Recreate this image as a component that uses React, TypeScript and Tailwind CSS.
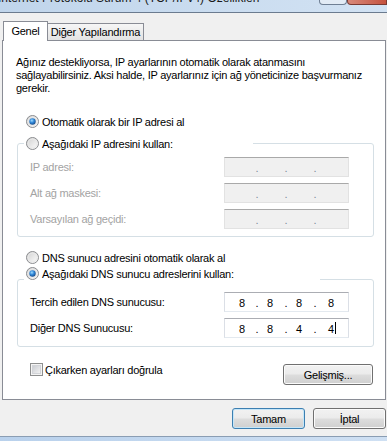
import React from "react";

function Radio({ checked }: { checked?: boolean }) {
  return (
    <svg width="13" height="13" viewBox="0 0 13 13" className="shrink-0 block">
      <defs>
        <linearGradient id="rbg" x1="0" y1="0" x2="1" y2="1">
          <stop offset="0" stopColor="#cfcfcf" />
          <stop offset="1" stopColor="#ffffff" />
        </linearGradient>
        <radialGradient id="rdot" cx="0.4" cy="0.35" r="0.75">
          <stop offset="0" stopColor="#9fdcff" />
          <stop offset="0.45" stopColor="#2f86d8" />
          <stop offset="1" stopColor="#123f78" />
        </radialGradient>
      </defs>
      <circle cx="6.5" cy="6.5" r="6" fill="url(#rbg)" stroke="#8a8c8f" />
      <circle cx="6.5" cy="6.5" r="4.5" fill="none" stroke="#e9e9e9" strokeWidth="1" />
      {checked && <circle cx="6.5" cy="6.5" r="3.2" fill="url(#rdot)" />}
    </svg>
  );
}

function Check() {
  return (
    <svg width="13" height="13" viewBox="0 0 13 13" className="shrink-0 block">
      <defs>
        <linearGradient id="cbg" x1="0" y1="0" x2="1" y2="1">
          <stop offset="0" stopColor="#c9ccd1" />
          <stop offset="1" stopColor="#f4f4f4" />
        </linearGradient>
      </defs>
      <rect x="0.5" y="0.5" width="12" height="12" fill="#f4f4f4" stroke="#8e8f8f" />
      <rect x="2.5" y="2.5" width="8" height="8" fill="url(#cbg)" stroke="#d2d4d8" />
    </svg>
  );
}

function IpBox({ values, disabled, caret }: { values: string[]; disabled?: boolean; caret?: boolean }) {
  const dot = disabled ? "text-[#7d8a99]" : "text-black";
  return (
    <div
      className={
        disabled
          ? "w-[125px] h-[20px] border border-[#e2e2e2] border-t-[#a9a9a9] bg-[#f0f0f0] flex items-center pl-[11px] pt-[2px] tracking-normal"
          : "w-[125px] h-[20px] border border-[#dbdfe6] border-t-[#abadb3] border-b-[#e3e9ef] bg-white flex items-center pl-[11px] pt-[2px] tracking-normal"
      }
    >
      <span className="w-[12px] text-center">{values[0]}</span>
      <span className={`ml-[6px] w-[6px] text-center ${dot}`}>.</span>
      <span className="ml-[4px] w-[12px] text-center">{values[1]}</span>
      <span className={`ml-[7px] w-[6px] text-center ${dot}`}>.</span>
      <span className="ml-[4px] w-[12px] text-center">{values[2]}</span>
      <span className={`ml-[7px] w-[6px] text-center ${dot}`}>.</span>
      <span className="ml-[7px] w-[12px] text-center relative">
        {values[3]}
        {caret && <span className="absolute left-[10px] top-[-1px] w-px h-[12px] bg-black" />}
      </span>
    </div>
  );
}

function Btn({ label, w, def }: { label: string; w: string; def?: boolean }) {
  return (
    <div
      className={`${w} h-[21px] rounded-[3px] border flex items-center justify-center bg-[linear-gradient(#f2f2f2_0%,#ebebeb_48%,#dddddd_52%,#cfcfcf_100%)] ${
        def ? "border-[#3c7fb1] shadow-[inset_0_0_0_1px_#c6e6f8]" : "border-[#707070] shadow-[inset_0_0_0_1px_#fbfbfb]"
      }`}
    >
      {label}
    </div>
  );
}

export default function App() {
  return (
    <div className="w-[387px] h-[441px] overflow-hidden bg-[#f0f0f0] flex flex-col font-['Liberation_Sans',Arial,sans-serif] text-[11px] leading-[12px] tracking-[-0.25px] text-black">
      {/* title bar */}
      <div className="h-[13px] shrink-0 flex items-start border-b border-[#6b7b8f] bg-[linear-gradient(90deg,#c0d5eb,#d2e2f3)] overflow-hidden">
        <span className="-mt-[9px] -ml-[2px] text-[12px] leading-[15px] tracking-normal whitespace-nowrap text-[#1a1a1a]">
          İnternet Protokolü Sürüm 4 (TCP/IPv4) Özellikleri
        </span>
        <div className="ml-auto flex">
          <div className="w-[28px] h-[5px] border border-t-0 border-[#6f7f94] rounded-b-[4px] bg-[#e2ebf5]" />
          <div className="w-[40px] h-[5px] border border-t-0 border-[#7a3a33] rounded-bl-[4px] bg-[linear-gradient(90deg,#d8897a,#c5523f)]" />
        </div>
      </div>

      {/* tabs */}
      <div className="h-[27px] shrink-0 flex items-end pl-[3px]">
        <div className="relative z-10 -mb-px h-[20px] w-[45px] border border-b-0 border-[#898c95] bg-white flex items-center justify-center pb-[1px]">
          Genel
        </div>
        <div className="h-[17px] w-[96px] border border-l-0 border-b-0 border-[#898c95] bg-[linear-gradient(#f6f6f6,#e3e3e3)] flex items-center justify-center whitespace-nowrap">
          Diğer Yapılandırma
        </div>
      </div>

      {/* panel */}
      <div className="ml-[2px] w-[384px] h-[360px] shrink-0 border border-[#898c95] bg-white flex flex-col">
        <p className="mt-[15px] pl-[13px] whitespace-nowrap leading-[13px]">
          Ağınız destekliyorsa, IP ayarlarının otomatik olarak atanmasını
          <br />
          sağlayabilirsiniz. Aksi halde, IP ayarlarınız için ağ yöneticinize başvurmanız
          <br />
          gerekir.
        </p>

        <div className="mt-[20px] ml-[23px] h-[13px] flex items-center gap-[3px]">
          <Radio checked />
          <span>Otomatik olarak bir IP adresi al</span>
        </div>

        {/* group 1 */}
        <div className="mt-[15px] ml-[14px] w-[357px] border border-[#d5dfe5] rounded-[3px] flex flex-col pb-[7px]">
          <div className="-mt-[7px] ml-[6px] pl-[2px] w-[229px] h-[13px] bg-white flex items-center gap-[3px]">
            <Radio />
            <span>Aşağıdaki IP adresini kullan:</span>
          </div>
          <div className="mt-[7px] flex flex-col gap-[6px] pl-[12px] text-[#a3a3a3]">
            {["IP adresi:", "Alt ağ maskesi:", "Varsayılan ağ geçidi:"].map((l) => (
              <div key={l} className="flex items-center h-[20px]">
                <span className="w-[194px]">{l}</span>
                <IpBox values={["", "", "", ""]} disabled />
              </div>
            ))}
          </div>
        </div>

        <div className="mt-[14px] ml-[23px] h-[13px] flex items-center gap-[3px]">
          <Radio />
          <span>DNS sunucu adresini otomatik olarak al</span>
        </div>

        {/* group 2 */}
        <div className="mt-[15px] ml-[14px] w-[357px] border border-[#d5dfe5] rounded-[3px] flex flex-col pb-[8px]">
          <div className="-mt-[13px] ml-[6px] pl-[2px] w-[296px] h-[13px] bg-white flex items-center gap-[3px]">
            <Radio checked />
            <span>Aşağıdaki DNS sunucu adreslerini kullan:</span>
          </div>
          <div className="mt-[12px] flex flex-col gap-[6px] pl-[12px]">
            <div className="flex items-center h-[20px]">
              <span className="w-[194px]">Tercih edilen DNS sunucusu:</span>
              <IpBox values={["8", "8", "8", "8"]} />
            </div>
            <div className="flex items-center h-[20px]">
              <span className="w-[194px]">Diğer DNS Sunucusu:</span>
              <IpBox values={["8", "8", "4", "4"]} caret />
            </div>
          </div>
        </div>

        <div className="mt-[16px] pl-[27px] pr-[12px] flex items-start">
          <div className="h-[13px] flex items-center gap-[2px]">
            <Check />
            <span>Çıkarken ayarları doğrula</span>
          </div>
          <div className="ml-auto mt-[1px]">
            <Btn label="Gelişmiş..." w="w-[90px]" />
          </div>
        </div>
      </div>

      {/* footer */}
      <div className="h-[36px] shrink-0 flex justify-end items-start gap-[8px] pt-[8px] pr-[1px]">
        <Btn label="Tamam" w="w-[73px]" def />
        <Btn label="İptal" w="w-[73px]" />
      </div>

      <div className="flex-1 border-t border-[#8a9db3] bg-[linear-gradient(90deg,#b9d1ec,#cfe0f3)]" />
    </div>
  );
}
